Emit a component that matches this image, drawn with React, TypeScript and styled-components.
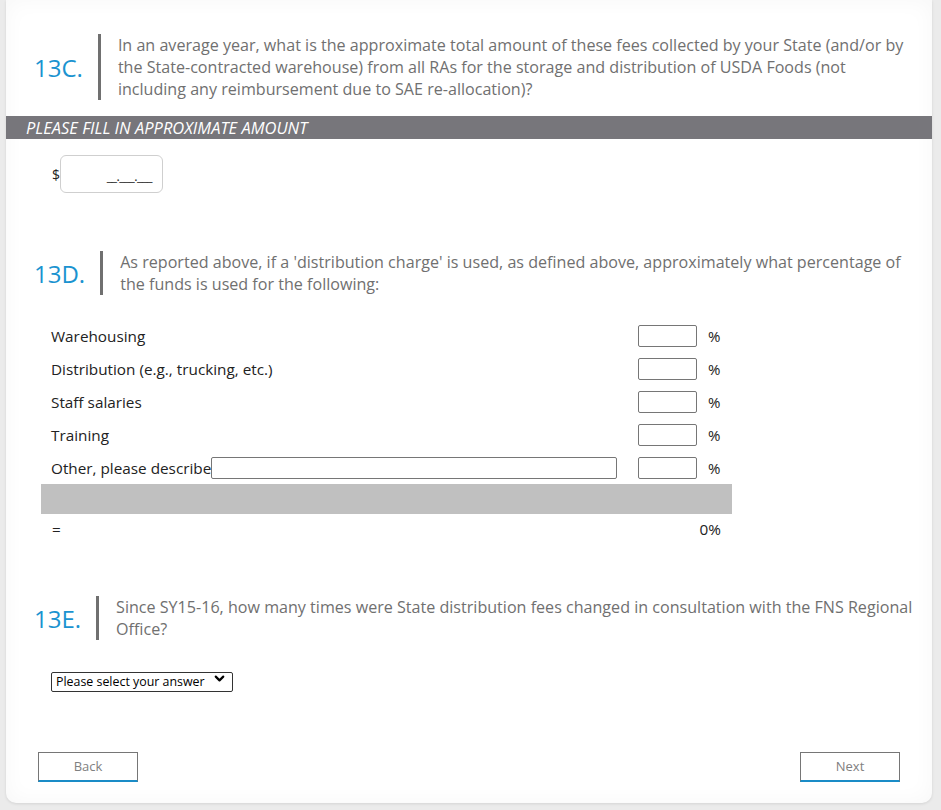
import React from 'react';
import styled, { createGlobalStyle } from 'styled-components';
import { ChevronDown } from 'lucide-react';

const GlobalStyle = createGlobalStyle`
  html, body {
    margin: 0;
    padding: 0;
    background: #ebebeb;
  }
  body {
    font-family: 'Open Sans', 'Noto Sans', sans-serif;
    color: #222;
  }
`;

const Page = styled.div`
  padding: 0 9px 8px 6px;
`;

const Card = styled.div`
  background: #fff;
  border-radius: 0 0 10px 10px;
  box-shadow: inset 0 0 22px rgba(0, 0, 0, 0.035), 0 1px 3px rgba(0, 0, 0, 0.1);
  padding: 34px 0 21px;
`;

const Question = styled.div<{ $top?: number }>`
  display: flex;
  align-items: center;
  padding: 0 10px 0 28px;
  margin-top: ${p => p.$top ?? 0}px;
`;

const QNumber = styled.div`
  font-size: 24px;
  color: #1b93d0;
  margin-right: 15px;
  white-space: nowrap;
`;

const QBody = styled.div`
  border-left: 3px solid #707070;
  padding-left: 17px;
  font-size: 16.1px;
  line-height: 22px;
  color: #707070;
  white-space: nowrap;
`;

const Instruction = styled.div`
  margin-top: 16px;
  background: #77767b;
  color: #fff;
  font-size: 16.5px;
  font-style: italic;
  line-height: 23px;
  padding-left: 20px;
  text-transform: uppercase;
`;

const AmountRow = styled.div`
  display: flex;
  align-items: center;
  padding: 16px 0 0 46px;
  font-size: 14px;
`;

const AmountInput = styled.div`
  width: 103px;
  height: 38px;
  box-sizing: border-box;
  border: 1px solid #cfcfcf;
  border-radius: 6px;
  display: flex;
  align-items: center;
  justify-content: flex-end;
  padding: 4px 10px 0 0;
  font-size: 12.5px;
  color: #222;
  letter-spacing: -0.5px;
`;

const Table = styled.div`
  margin: 24px 0 0 35px;
  width: 691px;
`;

const Row = styled.div`
  display: grid;
  grid-template-columns: 1fr 59px 35px;
  align-items: center;
  height: 33px;
  padding-left: 10px;
  font-size: 15.3px;
`;

const Label = styled.div`
  display: flex;
  align-items: center;
  padding-right: 21px;
  white-space: nowrap;
`;

const TextBox = styled.input<{ $grow?: boolean }>`
  box-sizing: border-box;
  height: 22px;
  width: ${p => (p.$grow ? 'auto' : '59px')};
  flex: ${p => (p.$grow ? 1 : 'none')};
  min-width: 0;
  border: 1px solid #767676;
  border-radius: 2px;
  padding: 0 4px;
  margin: 0;
  font: inherit;
`;

const Pct = styled.div`
  padding-left: 11px;
  font-size: 15px;
`;

const SumBar = styled.div`
  height: 30px;
  background: #c0c0c0;
`;

const TotalRow = styled.div`
  display: flex;
  justify-content: space-between;
  align-items: center;
  height: 30px;
  padding: 0 11px;
  font-size: 15.3px;
`;

const SelectWrap = styled.div`
  position: relative;
  display: inline-block;
  margin: 29px 0 0 45px;
`;

const Select = styled.select`
  appearance: none;
  width: 182px;
  height: 20px;
  box-sizing: border-box;
  border: 1px solid #333;
  border-radius: 2px;
  background: #fff;
  padding: 0 24px 0 4px;
  font-family: 'Open Sans', sans-serif;
  font-size: 12.4px;
  color: #000;
`;

const Chevron = styled(ChevronDown)`
  position: absolute;
  right: 6px;
  top: 2px;
  pointer-events: none;
`;

const Nav = styled.div`
  display: flex;
  justify-content: space-between;
  padding: 0 32px 0 32px;
  margin-top: 60px;
`;

const NavButton = styled.button`
  width: 100px;
  height: 30px;
  box-sizing: border-box;
  background: transparent;
  border: 1px solid #767676;
  border-bottom: 2px solid #1a8cc7;
  font-family: 'Open Sans', sans-serif;
  font-size: 13px;
  color: #808080;
  cursor: pointer;
`;

const items = ['Warehousing', 'Distribution (e.g., trucking, etc.)', 'Staff salaries', 'Training'];

export default function App() {
  return (
    <>
      <GlobalStyle />
      <Page>
        <Card>
          <Question>
            <QNumber>13C.</QNumber>
            <QBody>
              In an average year, what is the approximate total amount of these fees collected by your State (and/or by
              <br />
              the State-contracted warehouse) from all RAs for the storage and distribution of USDA Foods (not
              <br />
              including any reimbursement due to SAE re-allocation)?
            </QBody>
          </Question>
          <Instruction>Please fill in approximate amount</Instruction>
          <AmountRow>
            $<AmountInput>__.___.___</AmountInput>
          </AmountRow>

          <Question $top={58}>
            <QNumber>13D.</QNumber>
            <QBody>
              As reported above, if a 'distribution charge' is used, as defined above, approximately what percentage of
              <br />
              the funds is used for the following:
            </QBody>
          </Question>
          <Table>
            {items.map(item => (
              <Row key={item}>
                <Label>{item}</Label>
                <TextBox />
                <Pct>%</Pct>
              </Row>
            ))}
            <Row>
              <Label>
                Other, please describe
                <TextBox $grow />
              </Label>
              <TextBox />
              <Pct>%</Pct>
            </Row>
            <SumBar />
            <TotalRow>
              <span>=</span>
              <span>0%</span>
            </TotalRow>
          </Table>

          <Question $top={52}>
            <QNumber>13E.</QNumber>
            <QBody>
              Since SY15-16, how many times were State distribution fees changed in consultation with the FNS Regional
              <br />
              Office?
            </QBody>
          </Question>
          <SelectWrap>
            <Select defaultValue="">
              <option value="">Please select your answer</option>
            </Select>
            <Chevron size={15} strokeWidth={3.5} color="#000" />
          </SelectWrap>

          <Nav>
            <NavButton>Back</NavButton>
            <NavButton>Next</NavButton>
          </Nav>
        </Card>
      </Page>
    </>
  );
}
